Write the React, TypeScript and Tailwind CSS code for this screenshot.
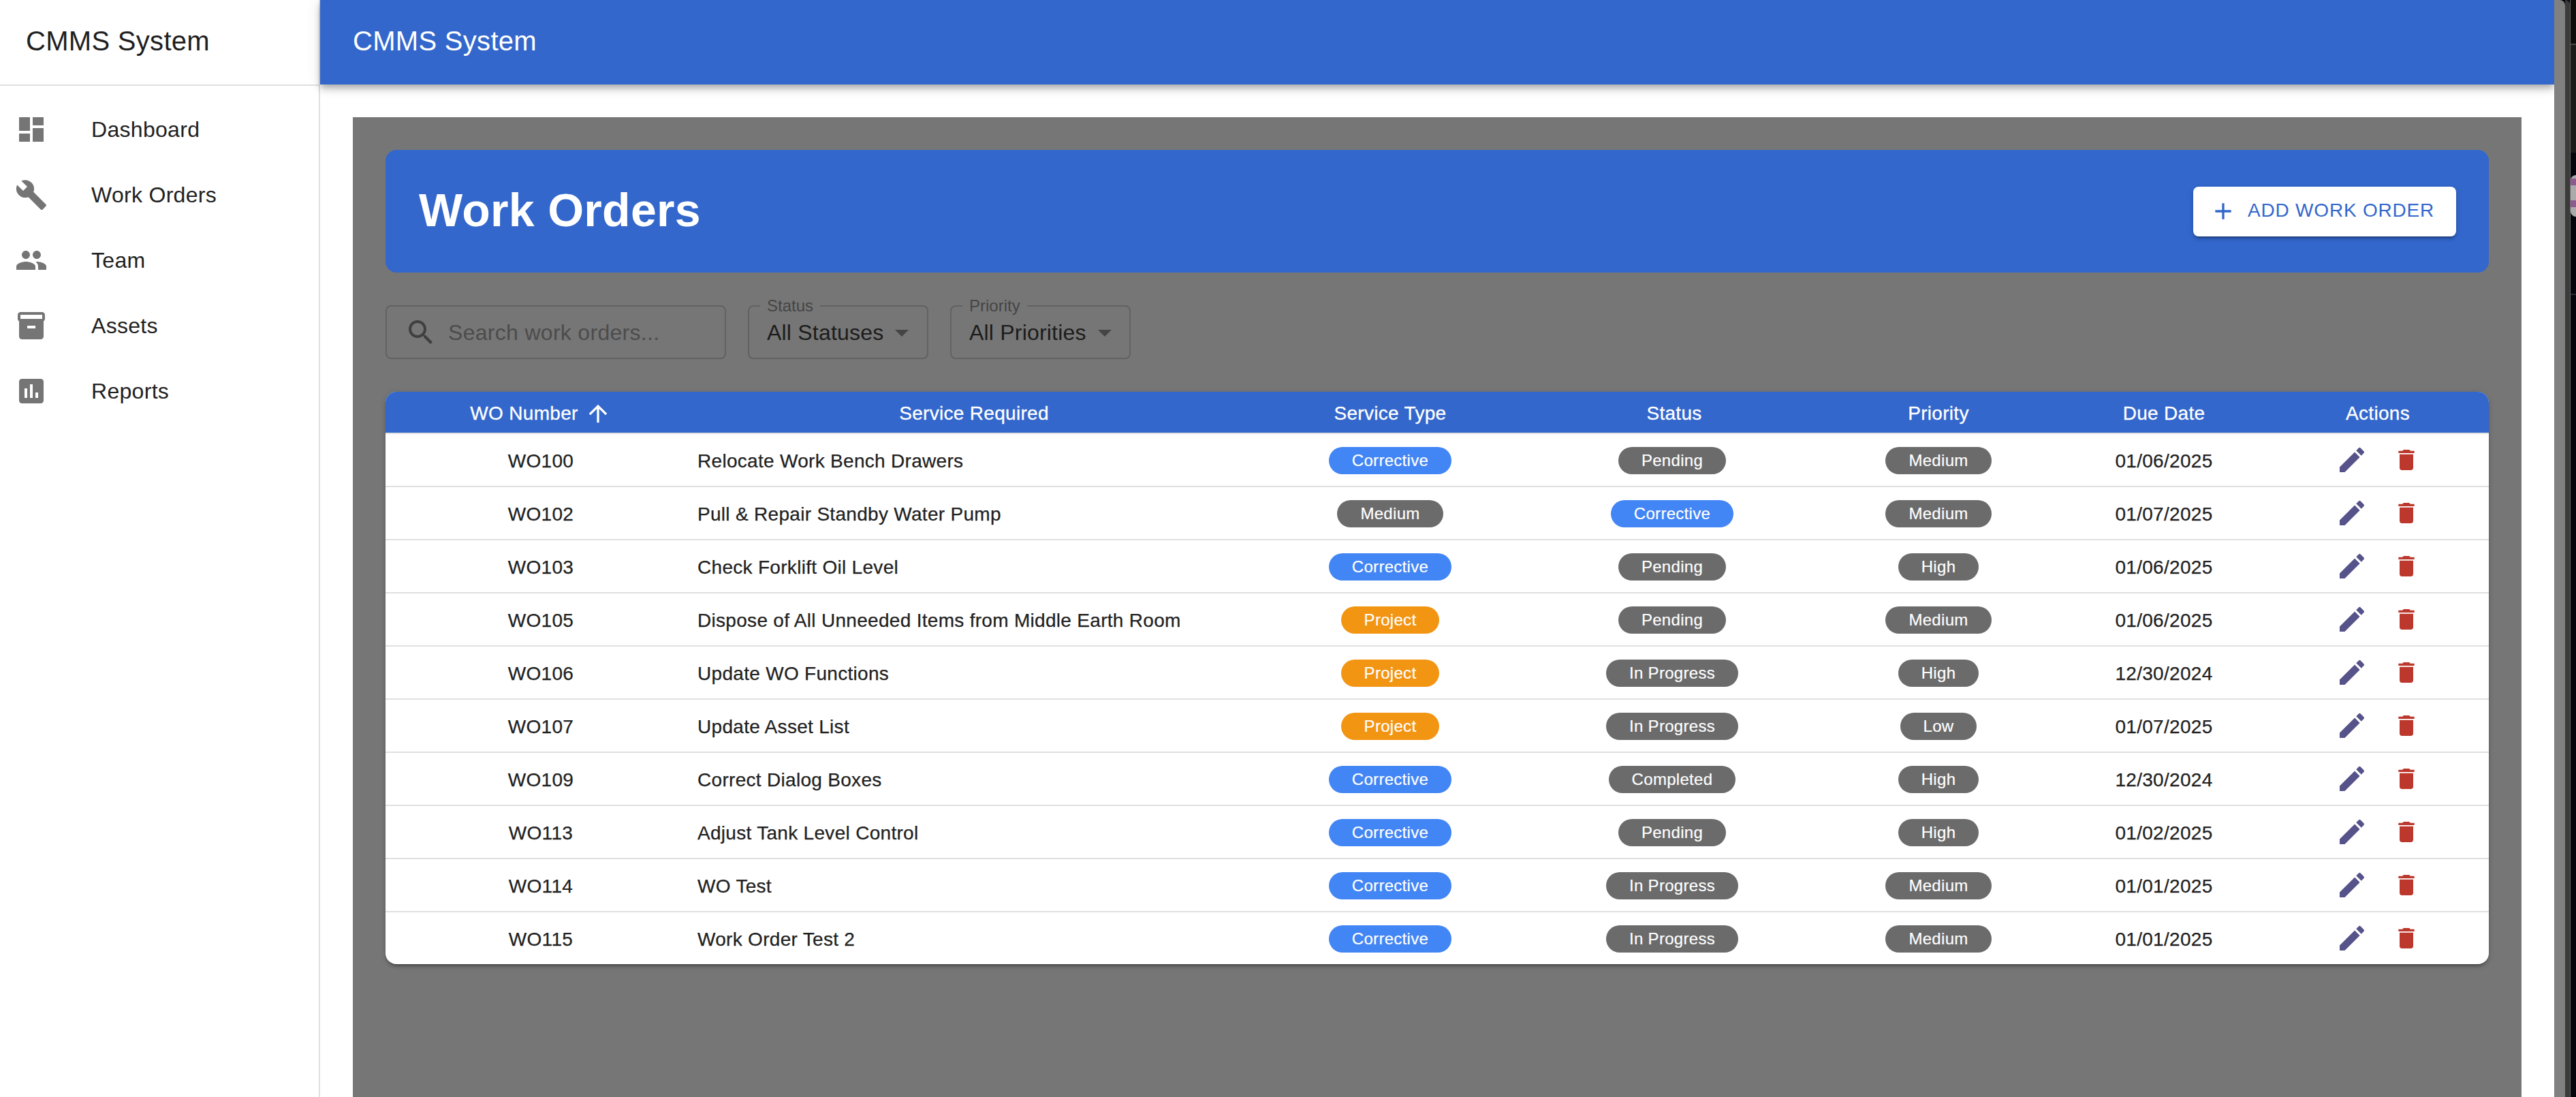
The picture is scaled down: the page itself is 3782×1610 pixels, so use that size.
import { ReactNode } from 'react';

function Icon({ d, className }: { d: string; className: string }) {
  return (
    <svg viewBox="0 0 24 24" fill="currentColor" className={className}>
      <path d={d} />
    </svg>
  );
}

const icons = {
  dashboard: 'M3 13h8V3H3v10zm0 8h8v-6H3v6zm10 0h8V11h-8v10zm0-18v6h8V3h-8z',
  build:
    'M22.7 19l-9.1-9.1c.9-2.3.4-5-1.5-6.9-2-2-5-2.4-7.4-1.3L9 6 6 9 1.6 4.7C.4 7.1.9 10.1 2.9 12.1c1.9 1.9 4.6 2.4 6.9 1.5l9.1 9.1c.4.4 1 .4 1.4 0l2.3-2.3c.5-.4.5-1.1.1-1.4z',
  people:
    'M16 11c1.66 0 2.99-1.34 2.99-3S17.66 5 16 5c-1.66 0-3 1.34-3 3s1.34 3 3 3zm-8 0c1.66 0 2.99-1.34 2.99-3S9.66 5 8 5C6.34 5 5 6.34 5 8s1.34 3 3 3zm0 2c-2.33 0-7 1.17-7 3.5V19h14v-2.5c0-2.33-4.67-3.5-7-3.5zm8 0c-.29 0-.62.02-.97.05 1.16.84 1.97 1.97 1.97 3.45V19h6v-2.5c0-2.33-4.67-3.5-7-3.5z',
  inventory:
    'M20 2H4c-1 0-2 .9-2 2v3.01c0 .72.43 1.34 1 1.69V20c0 1.1 1.1 2 2 2h14c.9 0 2-.9 2-2V8.7c.57-.35 1-.97 1-1.69V4c0-1.1-1-2-2-2zm-5 12H9v-2h6v2zm5-7H4V4l16-.02V7z',
  assessment:
    'M19 3H5c-1.1 0-2 .9-2 2v14c0 1.1.9 2 2 2h14c1.1 0 2-.9 2-2V5c0-1.1-.9-2-2-2zM9 17H7v-7h2v7zm4 0h-2V7h2v10zm4 0h-2v-4h2v4z',
  edit: 'M3 17.25V21h3.75L17.81 9.94l-3.75-3.75L3 17.25zM20.71 7.04c.39-.39.39-1.02 0-1.41l-2.34-2.34a.9959.9959 0 0 0-1.41 0l-1.83 1.83 3.75 3.75 1.83-1.83z',
  trash: 'M6 19c0 1.1.9 2 2 2h8c1.1 0 2-.9 2-2V7H6v12zM19 4h-3.5l-1-1h-5l-1 1H5v2h14V4z',
  search:
    'M15.5 14h-.79l-.28-.27C15.41 12.59 16 11.11 16 9.5 16 5.91 13.09 3 9.5 3S3 5.91 3 9.5 5.91 16 9.5 16c1.61 0 3.09-.59 4.23-1.57l.27.28v.79l5 4.99L20.49 19l-4.99-5zm-6 0C7.01 14 5 11.99 5 9.5S7.01 5 9.5 5 14 7.01 14 9.5 11.99 14 9.5 14z',
  arrowUp: 'M4 12l1.41 1.41L11 7.83V20h2V7.83l5.58 5.59L20 12l-8-8-8 8z',
  add: 'M19 13h-6v6h-2v-6H5v-2h6V5h2v6h6v2z',
  dropdown: 'M7 10l5 5 5-5z',
};

const navItems = [
  { label: 'Dashboard', icon: icons.dashboard },
  { label: 'Work Orders', icon: icons.build },
  { label: 'Team', icon: icons.people },
  { label: 'Assets', icon: icons.inventory },
  { label: 'Reports', icon: icons.assessment },
];

const rows = [
  ['WO100', 'Relocate Work Bench Drawers', 'Corrective', 'Pending', 'Medium', '01/06/2025'],
  ['WO102', 'Pull & Repair Standby Water Pump', 'Medium', 'Corrective', 'Medium', '01/07/2025'],
  ['WO103', 'Check Forklift Oil Level', 'Corrective', 'Pending', 'High', '01/06/2025'],
  ['WO105', 'Dispose of All Unneeded Items from Middle Earth Room', 'Project', 'Pending', 'Medium', '01/06/2025'],
  ['WO106', 'Update WO Functions', 'Project', 'In Progress', 'High', '12/30/2024'],
  ['WO107', 'Update Asset List', 'Project', 'In Progress', 'Low', '01/07/2025'],
  ['WO109', 'Correct Dialog Boxes', 'Corrective', 'Completed', 'High', '12/30/2024'],
  ['WO113', 'Adjust Tank Level Control', 'Corrective', 'Pending', 'High', '01/02/2025'],
  ['WO114', 'WO Test', 'Corrective', 'In Progress', 'Medium', '01/01/2025'],
  ['WO115', 'Work Order Test 2', 'Corrective', 'In Progress', 'Medium', '01/01/2025'],
];

const GRID = 'grid grid-cols-[456px_816px_406px_422px_360px_302px_326px] items-center';

function Chip({ label }: { label: string }) {
  const color =
    label === 'Corrective' ? 'bg-[#4285f4]' : label === 'Project' ? 'bg-[#f29513]' : 'bg-[#6b6b6b]';
  return (
    <span className={`inline-flex h-10 items-center rounded-[20px] px-[34px] text-2xl leading-none tracking-[0.3px] text-white [-webkit-text-stroke:0.2px_white] ${color}`}>
      {label}
    </span>
  );
}

function SelectField({ label, value, gap }: { label: string; value: string; gap: string }) {
  return (
    <div className="relative flex h-[79px] w-[265px] items-center rounded-lg border-2 border-[#626262] pl-[26px]">
      <span className="absolute -top-[15px] left-[16px] bg-[#767676] px-[10px] text-2xl leading-[28px] text-[#454545]">
        {label}
      </span>
      <span className="text-[32px] leading-none tracking-[0.2px] text-[#1c1c1c]">{value}</span>
      <Icon d={icons.dropdown} className={`h-12 w-12 text-[#454545] ${gap}`} />
    </div>
  );
}

function Sidebar() {
  return (
    <aside className="flex w-[470px] shrink-0 flex-col border-r-2 border-[#e0e0e0] bg-white">
      <div className="flex h-[126px] shrink-0 items-center border-b-2 border-[#e0e0e0] pb-1 pl-[38px] text-[40px] tracking-[0.3px] text-[#1f1f1f]">
        CMMS System
      </div>
      <nav className="flex flex-col py-4">
        {navItems.map((item) => (
          <div key={item.label} className="flex h-24 items-center pl-[22px]">
            <Icon d={item.icon} className="h-12 w-12 text-[#757575]" />
            <span className="ml-16 text-[32px] tracking-[0.3px] text-[#212121]">{item.label}</span>
          </div>
        ))}
      </nav>
    </aside>
  );
}

function HeaderCell({ children }: { children: ReactNode }) {
  return (
    <div className="flex items-center justify-center pt-1 tracking-[0.3px] [-webkit-text-stroke:0.3px_white]">
      {children}
    </div>
  );
}

function WorkOrderTable() {
  return (
    <div className="overflow-hidden rounded-2xl bg-white shadow-[0_6px_2px_-4px_rgba(0,0,0,0.2),0_4px_4px_0_rgba(0,0,0,0.14),0_2px_10px_0_rgba(0,0,0,0.12)]">
      <div className={`${GRID} h-[62px] border-b-2 border-[#e0e0e0] bg-[#3367cc] text-[28px] text-white`}>
        <HeaderCell>
          WO Number
          <Icon d={icons.arrowUp} className="ml-[9px] h-10 w-10" />
        </HeaderCell>
        <HeaderCell>Service Required</HeaderCell>
        <HeaderCell>Service Type</HeaderCell>
        <HeaderCell>
          <span className="ml-1.5">Status</span>
        </HeaderCell>
        <HeaderCell>Priority</HeaderCell>
        <HeaderCell>Due Date</HeaderCell>
        <HeaderCell>Actions</HeaderCell>
      </div>
      {rows.map((row) => (
        <div key={row[0]} className={`${GRID} h-[78px] border-b-2 border-[#e0e0e0] text-[28px] tracking-[0.3px] text-[#212121] last:h-[76px] last:border-b-0`}>
          <div className="pt-1 text-center [-webkit-text-stroke:0.25px_#212121]">{row[0]}</div>
          <div className="pl-[2px] pt-1 [-webkit-text-stroke:0.25px_#212121]">{row[1]}</div>
          <div className="text-center"><Chip label={row[2]} /></div>
          <div className="text-center"><Chip label={row[3]} /></div>
          <div className="text-center"><Chip label={row[4]} /></div>
          <div className="pt-1 text-center [-webkit-text-stroke:0.25px_#212121]">{row[5]}</div>
          <div className="flex items-center justify-center gap-5">
            <button className="p-2 text-[#56528a]">
              <Icon d={icons.edit} className="h-12 w-12" />
            </button>
            <button className="p-2 text-[#bc372c]">
              <Icon d={icons.trash} className="h-10 w-10" />
            </button>
          </div>
        </div>
      ))}
    </div>
  );
}

export default function App() {
  return (
    <div className="flex h-[1610px] w-[3782px] overflow-hidden bg-[#05060b] font-['Liberation_Sans',Arial,sans-serif]">
      <Sidebar />
      <div className="flex w-[3280px] shrink-0 flex-col bg-white">
        <header className="flex h-[124px] shrink-0 items-center bg-[#3367cc] pb-1 pl-12 text-[40px] tracking-[0.3px] text-white shadow-[0_4px_8px_-2px_rgba(0,0,0,0.2),0_8px_10px_0_rgba(0,0,0,0.14),0_2px_20px_0_rgba(0,0,0,0.12)]">
          CMMS System
        </header>
        <main className="flex-1 px-12 pt-12">
          <div className="h-full bg-[#767676] px-12 pt-12">
            <div className="flex h-[180px] items-center justify-between rounded-2xl bg-[#3367cc] pl-[49px] pr-12">
              <h1 className="mb-1 text-[68px] font-bold leading-none tracking-[0.3px] text-white">Work Orders</h1>
              <button className="flex h-[73px] w-[386px] items-center rounded-lg bg-white pl-6 text-[28px] tracking-[0.8px] text-[#3367cc] shadow-[0_6px_2px_-4px_rgba(0,0,0,0.2),0_4px_4px_0_rgba(0,0,0,0.14),0_2px_10px_0_rgba(0,0,0,0.12)]">
                <Icon d={icons.add} className="mr-4 h-10 w-10" />
                <span className="pb-[2px]">ADD WORK ORDER</span>
              </button>
            </div>
            <div className="mt-12 flex gap-8">
              <div className="flex h-[79px] w-[500px] items-center rounded-lg border-2 border-[#626262] pl-[26px]">
                <Icon d={icons.search} className="h-12 w-12 text-[#3f3f3f]" />
                <input
                  placeholder="Search work orders..."
                  className="ml-4 w-[400px] bg-transparent text-[32px] tracking-[0.3px] outline-none placeholder:text-[#4c4c4c]"
                />
              </div>
              <SelectField label="Status" value="All Statuses" gap="ml-[3px]" />
              <SelectField label="Priority" value="All Priorities" gap="ml-[3px]" />
            </div>
            <div className="mt-12">
              <WorkOrderTable />
            </div>
          </div>
        </main>
      </div>
      {/* window edge and desktop peeking in at the right */}
      <div className="h-full w-4 shrink-0 rounded-tr-lg bg-[#808080]" />
      <div className="h-full w-[7px] shrink-0 rounded-tr-lg bg-[#3a3a3a]" />
      <div className="h-full w-px shrink-0 bg-[#666666]" />
      <div className="flex h-full w-2 shrink-0 flex-col">
        <div className="h-16 bg-[#0e0d0a]" />
        <div className="h-0.5 bg-[#4a4a48]" />
        <div className="h-[158px] bg-[#1c1c18]" />
        <div className="mt-[33px] flex h-[61px] flex-col rounded-l-[14px] bg-[#aaaaaa] pt-[5px]">
          <div className="h-[10px] bg-[#8f5a8f]" />
          <div className="mt-[22px] h-[10px] bg-[#8f5a8f]" />
        </div>
        <div className="mt-[113px] h-0.5 bg-[#2a2a35]" />
      </div>
    </div>
  );
}
